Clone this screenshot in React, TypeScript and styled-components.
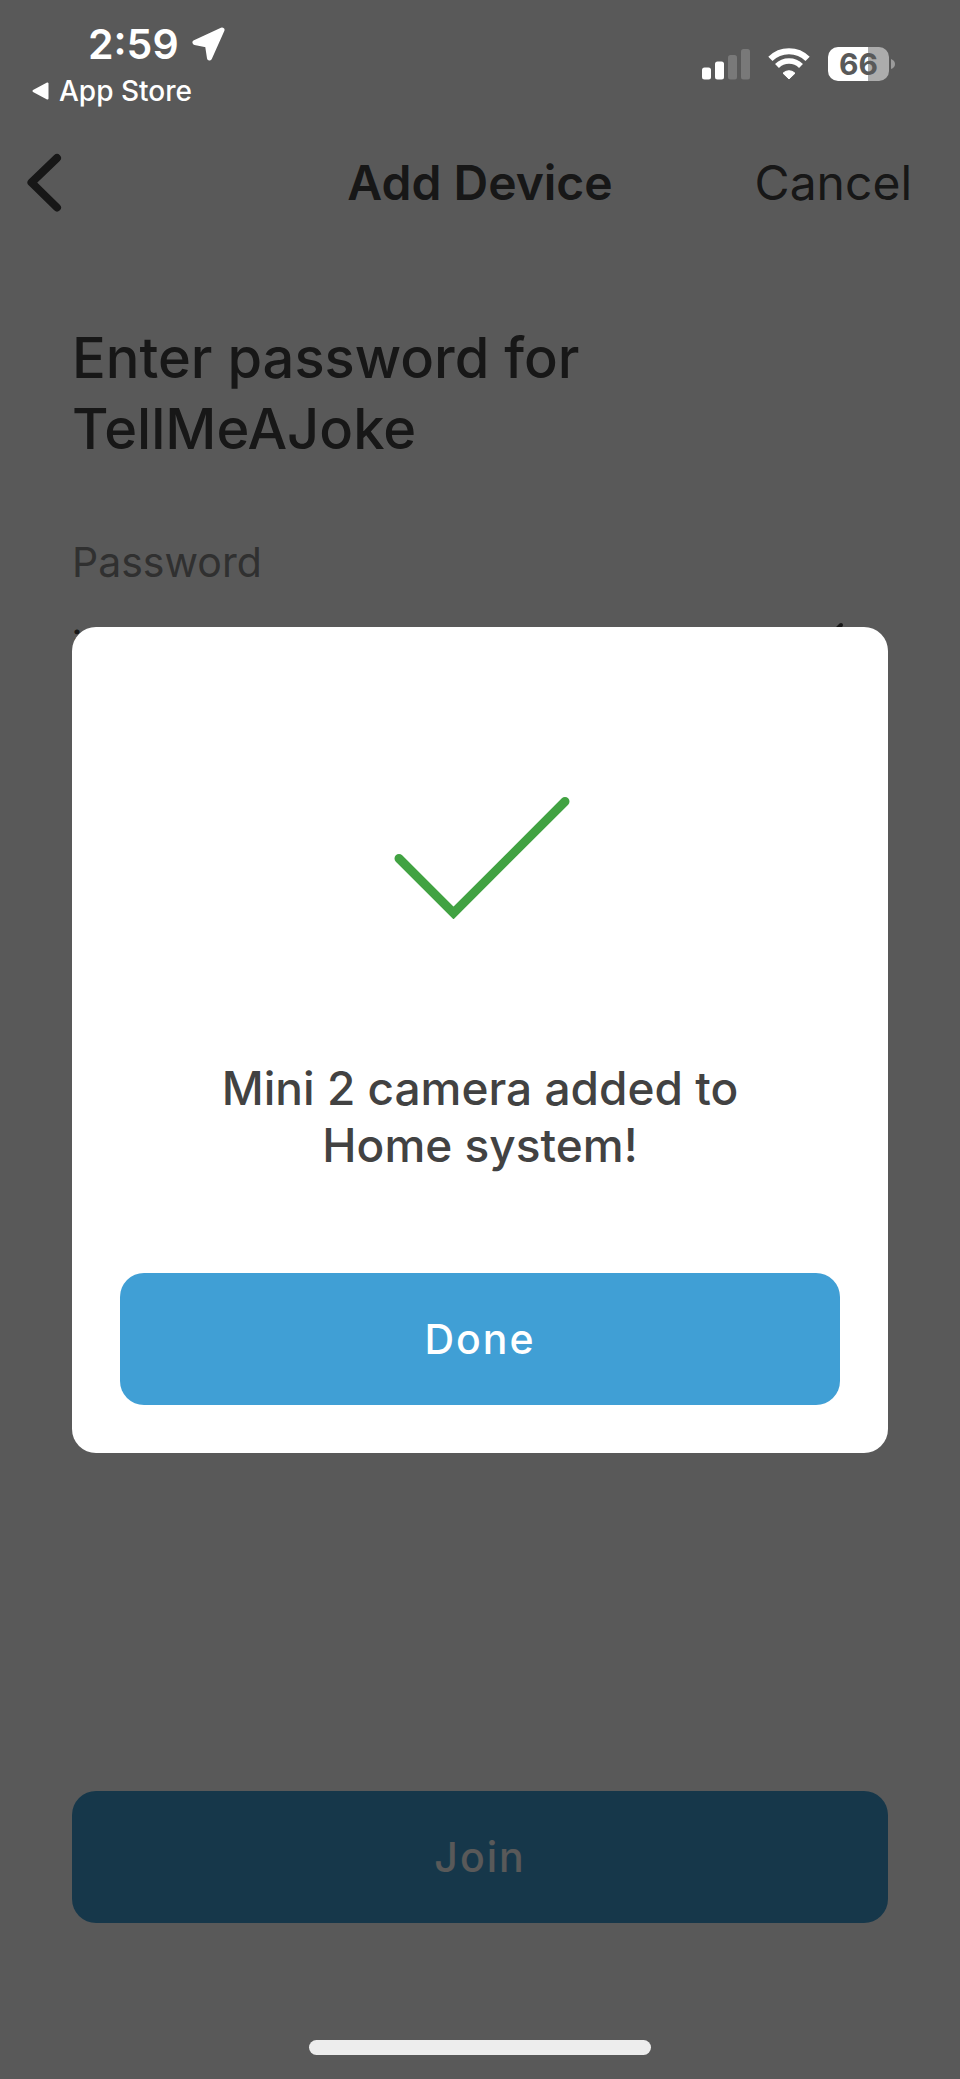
import React, { useId, useState } from "react";
import styled, { createGlobalStyle } from "styled-components";

const ink = "#424242";
const accent = "#409fd5";

const GlobalStyle = createGlobalStyle`
  *, *::before, *::after { box-sizing: border-box; }
  body {
    margin: 0;
    background: #ffffff;
    font-family: Inter, "Liberation Sans", sans-serif;
    color: ${ink};
  }
  button, input { font: inherit; color: inherit; }
`;

const Screen = styled.div`
  position: relative;
  display: flex;
  flex-direction: column;
  min-height: 100vh;
`;

const StatusBar = styled.div`
  position: relative;
  z-index: 2;
  display: flex;
  justify-content: space-between;
  align-items: center;
  height: 127px;
  padding: 0 65px 0 32px;
  color: #ffffff;
`;

const StatusLeft = styled.div`
  display: flex;
  flex-direction: column;
  align-items: flex-start;
  gap: 2px;
  padding-top: 3px;
`;

const Clock = styled.div`
  display: flex;
  align-items: center;
  gap: 13px;
  padding-left: 56px;
  font-size: 41px;
  line-height: 50px;
  font-weight: 600;
`;

const ReturnLink = styled.a`
  display: flex;
  align-items: center;
  gap: 10px;
  color: inherit;
  text-decoration: none;
  font-size: 28px;
  line-height: 40px;
  font-weight: 500;
`;

const StatusIcons = styled.div`
  display: flex;
  align-items: center;
  gap: 18px;
`;

const Battery = styled.div`
  display: flex;
  align-items: center;
  gap: 2px;
`;

const BatteryBody = styled.div<{ $level: number }>`
  width: 61px;
  height: 34px;
  border-radius: 10px;
  background: linear-gradient(to right, #ffffff ${(p) => p.$level}%, #acacac ${(p) => p.$level}%);
  color: #595959;
  font-size: 30px;
  line-height: 34px;
  font-weight: 700;
  text-align: center;
`;

const NavBar = styled.header`
  display: grid;
  grid-template-columns: 1fr auto 1fr;
  align-items: center;
  height: 112px;
  padding: 0 24px;
`;

const BarSide = styled.div<{ $end?: boolean }>`
  display: flex;
  justify-content: ${(p) => (p.$end ? "flex-end" : "flex-start")};
  padding-right: ${(p) => (p.$end ? "24px" : "0")};
`;

const PlainButton = styled.button`
  display: flex;
  padding: 0;
  border: 0;
  background: none;
  font-size: 48px;
  line-height: 60px;
  cursor: pointer;
`;

const BarTitle = styled.h1`
  margin: 0;
  font-size: 48px;
  line-height: 60px;
  font-weight: 600;
`;

const Form = styled.form`
  display: flex;
  flex: 1;
  flex-direction: column;
  padding: 84px 72px 156px;
`;

const Heading = styled.h2`
  max-width: 640px;
  margin: 0 0 73px;
  font-size: 56px;
  line-height: 71px;
  font-weight: 500;
  overflow-wrap: anywhere;
`;

const Label = styled.label`
  color: #898989;
  font-size: 41px;
  line-height: 48px;
`;

const Field = styled.div`
  display: flex;
  align-items: center;
  margin: 24px 0 auto;
  padding-right: 42px;
`;

const FieldInput = styled.input`
  flex: 1;
  min-width: 0;
  height: 72px;
  padding: 0;
  border: 0;
  outline: 0;
  background: none;
  font-size: 41px;
`;

const WideButton = styled.button`
  width: 100%;
  height: 132px;
  border: 0;
  border-radius: 24px;
  background: ${accent};
  color: #ffffff;
  font-size: 41px;
  font-weight: 500;
  letter-spacing: 2px;
  cursor: pointer;
`;

const Overlay = styled.div`
  position: absolute;
  inset: 0;
  z-index: 1;
  display: flex;
  align-items: center;
  justify-content: center;
  padding: 0 72px;
  background: rgba(0, 0, 0, 0.65);
`;

const Dialog = styled.section`
  display: flex;
  flex-direction: column;
  align-items: center;
  width: 100%;
  padding: 168px 48px 48px;
  border-radius: 24px;
  background: #ffffff;
`;

const Message = styled.p`
  max-width: 560px;
  margin: 141px 0 99px;
  font-size: 46px;
  line-height: 57px;
  font-weight: 500;
  text-align: center;
`;

const HomeIndicator = styled.div`
  position: absolute;
  z-index: 2;
  bottom: 24px;
  left: 50%;
  width: 342px;
  height: 15px;
  margin-left: -171px;
  border-radius: 8px;
  background: #ededed;
`;

const LocationArrow = () => (
  <svg width="33" height="34" viewBox="0 0 33 34" aria-hidden="true">
    <path
      d="M30 3 L3 15.5 L15.5 18 L17.5 31 Z"
      fill="#fff"
      stroke="#fff"
      strokeWidth="5"
      strokeLinejoin="round"
    />
  </svg>
);

const ReturnTriangle = () => (
  <svg width="17" height="18" viewBox="0 0 17 18" aria-hidden="true">
    <path d="M1.5 9 L15.5 1.5 V16.5 Z" fill="#fff" stroke="#fff" strokeWidth="2" strokeLinejoin="round" />
  </svg>
);

const Signal = () => (
  <svg width="48" height="32" viewBox="0 0 48 32" fill="#fff" aria-hidden="true">
    <rect x="0" y="19.5" width="9" height="12" rx="2.5" />
    <rect x="13" y="13.5" width="9" height="18" rx="2.5" />
    <rect x="26" y="7" width="9" height="24.5" rx="2.5" fill="#797979" />
    <rect x="39" y="1" width="9" height="30.5" rx="2.5" fill="#797979" />
  </svg>
);

const Wifi = () => (
  <svg width="42" height="32" viewBox="0 0 42 32" fill="none" stroke="#fff" aria-hidden="true">
    <path d="M2.4 10.8 A26.5 26.5 0 0 1 39.6 10.8" strokeWidth="6" />
    <path d="M9 18 A17 17 0 0 1 33 18" strokeWidth="5.5" />
    <path d="M21 31 L15 25.2 A8.5 8.5 0 0 1 27 25.2 Z" fill="#fff" strokeWidth="1" strokeLinejoin="round" />
  </svg>
);

const BatteryCap = () => (
  <svg width="4" height="10" viewBox="0 0 4 10" aria-hidden="true">
    <path d="M0 0 Q4 1.5 4 5 Q4 8.5 0 10 Z" fill="#9b9b9b" />
  </svg>
);

const BackChevron = () => (
  <svg width="40" height="60" viewBox="0 0 40 60" aria-hidden="true">
    <path
      d="M33 5 L7.5 29.5 L33 54.5"
      fill="none"
      stroke={ink}
      strokeWidth="8"
      strokeLinecap="round"
      strokeLinejoin="round"
    />
  </svg>
);

const HideEye = () => (
  <svg
    width="56"
    height="56"
    viewBox="0 0 56 56"
    fill="none"
    stroke={ink}
    strokeWidth="4"
    strokeLinecap="round"
    aria-hidden="true"
  >
    <path d="M4 28 Q28 0 52 28 Q28 56 4 28 Z" />
    <circle cx="28" cy="28" r="7" />
    <path d="M51 7 L6 52" />
  </svg>
);

const Tick = () => (
  <svg width="180" height="124" viewBox="0 0 180 124" aria-hidden="true">
    <path d="M9 63.5 L63.5 118 L175 6.5" fill="none" stroke="#41a242" strokeWidth="9" strokeLinecap="round" />
  </svg>
);

export default function App() {
  const fieldId = useId();
  const messageId = useId();
  const [password, setPassword] = useState("j");
  const [masked, setMasked] = useState(false);
  const [open, setOpen] = useState(true);

  return (
    <Screen>
      <GlobalStyle />
      <StatusBar>
        <StatusLeft>
          <Clock>
            2:59
            <LocationArrow />
          </Clock>
          <ReturnLink href="#">
            <ReturnTriangle />
            App Store
          </ReturnLink>
        </StatusLeft>
        <StatusIcons>
          <Signal />
          <Wifi />
          <Battery>
            <BatteryBody $level={66}>66</BatteryBody>
            <BatteryCap />
          </Battery>
        </StatusIcons>
      </StatusBar>

      <NavBar>
        <BarSide>
          <PlainButton type="button" aria-label="Back">
            <BackChevron />
          </PlainButton>
        </BarSide>
        <BarTitle>Add Device</BarTitle>
        <BarSide $end>
          <PlainButton type="button">Cancel</PlainButton>
        </BarSide>
      </NavBar>

      <Form onSubmit={(e) => e.preventDefault()}>
        <Heading>Enter password for TellMeAJoke</Heading>
        <Label htmlFor={fieldId}>Password</Label>
        <Field>
          <FieldInput
            id={fieldId}
            type={masked ? "password" : "text"}
            value={password}
            onChange={(e) => setPassword(e.target.value)}
          />
          <PlainButton type="button" aria-label="Toggle password visibility" onClick={() => setMasked(!masked)}>
            <HideEye />
          </PlainButton>
        </Field>
        <WideButton type="submit">Join</WideButton>
      </Form>

      {open && (
        <Overlay>
          <Dialog role="dialog" aria-modal="true" aria-labelledby={messageId}>
            <Tick />
            <Message id={messageId}>Mini 2 camera added to Home system!</Message>
            <WideButton type="button" onClick={() => setOpen(false)}>
              Done
            </WideButton>
          </Dialog>
        </Overlay>
      )}
      <HomeIndicator />
    </Screen>
  );
}
